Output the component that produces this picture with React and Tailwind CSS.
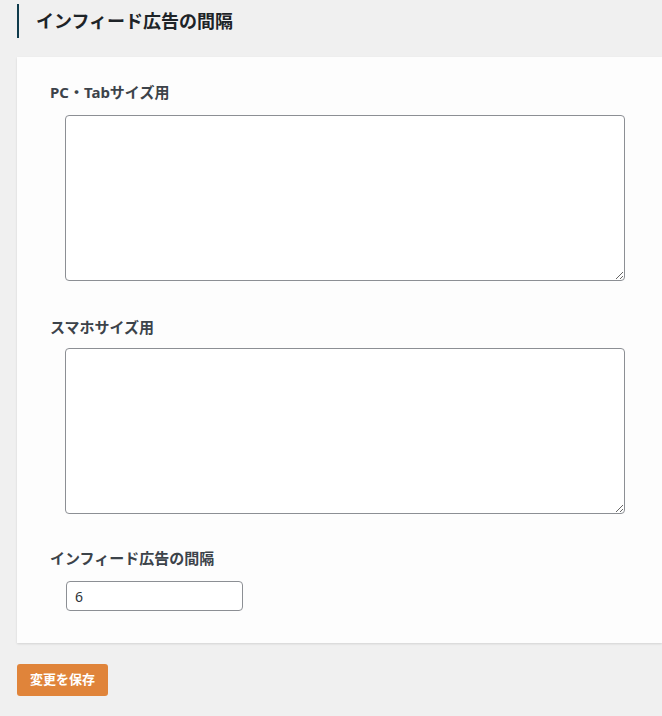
export default function App() {
  return (
    <div
      className="min-h-[716px] bg-[#f0f0f0] overflow-hidden"
      style={{ fontFamily: '"Noto Sans", "Noto Sans CJK JP", sans-serif' }}
    >
      {/* 見出し */}
      <div className="pt-[4px] pl-[17px]">
        <h2 className="border-l-2 border-[#0f3b4c] pl-[17px] h-[34px] flex items-center text-[18px] font-bold text-[#1d2327] leading-none">
          インフィード広告の間隔
        </h2>
      </div>

      {/* 設定カード */}
      <div className="ml-[17px] mt-[19px] bg-[#fdfdfd] shadow-[0_1px_2px_rgba(0,0,0,0.12)] pl-[33px] pr-[37px] pt-[24px] pb-[32px]">
        <div className="text-[15px] font-bold text-[#3c434a] leading-[22px]">
          PC・Tabサイズ用
        </div>
        <div className="pl-[15px] mt-[12px]">
          <textarea className="block w-[560px] h-[166px] bg-white border border-[#8c8f94] rounded-[4px] outline-none" />
        </div>

        <div className="mt-[35px] text-[15px] font-bold text-[#3c434a] leading-[22px]">
          スマホサイズ用
        </div>
        <div className="pl-[15px] mt-[10px]">
          <textarea className="block w-[560px] h-[166px] bg-white border border-[#8c8f94] rounded-[4px] outline-none" />
        </div>

        <div className="mt-[33px] text-[15px] font-bold text-[#3c434a] leading-[22px]">
          インフィード広告の間隔
        </div>
        <div className="pl-[16px] mt-[12px]">
          <input
            type="text"
            defaultValue="6"
            className="block w-[177px] h-[30px] bg-white border border-[#8c8f94] rounded-[4px] px-[8px] text-[14px] text-[#2c3338] outline-none"
          />
        </div>
      </div>

      <div className="pl-[17px] mt-[21px]">
        <button className="w-[91px] h-[32px] rounded-[3px] bg-[#e0843a] text-white text-[13px] font-bold">
          変更を保存
        </button>
      </div>
    </div>
  );
}
